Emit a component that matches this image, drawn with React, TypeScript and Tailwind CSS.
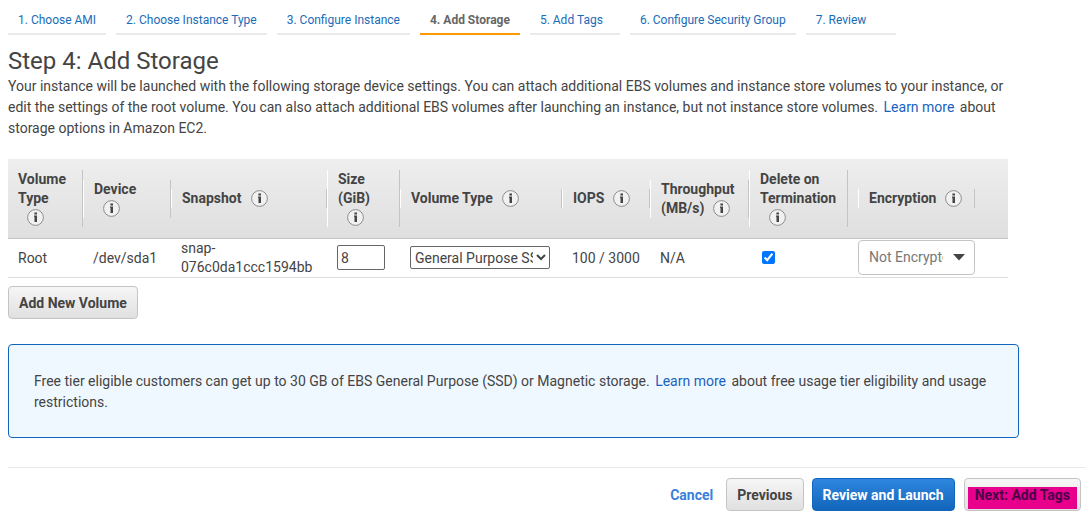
import React from "react";

type Step = { label: string; current?: boolean };

const steps: Step[] = [
  { label: "1. Choose AMI" },
  { label: "2. Choose Instance Type" },
  { label: "3. Configure Instance" },
  { label: "4. Add Storage", current: true },
  { label: "5. Add Tags" },
  { label: "6. Configure Security Group" },
  { label: "7. Review" },
];

function InfoButton({ topic }: { topic: string }) {
  return (
    <button type="button" aria-label={`About ${topic}`} className="mx-[9px] inline-block size-[17px] align-[-4px]">
      <svg viewBox="0 0 17 17" className="block size-full" aria-hidden="true">
        <circle cx="8.5" cy="8.5" r="7.9" fill="#f1f1f1" stroke="#8c8c8c" strokeWidth="1" />
        <path d="M7.4 3.4H10v2H7.4zM7 6.6h3V13H7.5V7.8H7z" fill="#444" />
      </svg>
    </button>
  );
}

type HeaderProps = { label: string; first?: boolean; inset?: boolean };

function HeaderCell({ label, first, inset }: HeaderProps) {
  return (
    <th scope="col" className={inset ? "py-[11px] pl-[10px] pr-[33px]" : "py-[11px]"}>
      <div
        className={
          first
            ? "border-r border-[#c4c4c4] pl-[10px]"
            : "border-l border-r border-l-white border-r-[#c4c4c4] pl-[10px]"
        }
      >
        {label}
        <InfoButton topic={label} />
      </div>
    </th>
  );
}

const button =
  "relative h-[33px] rounded-[4px] border border-[#c4c4c4] bg-linear-to-b from-[#f6f6f6] to-[#e0e0e0] px-[10px] pt-[2px] font-bold whitespace-nowrap";

export default function App() {
  return (
    <main className="flex min-h-screen flex-col bg-white pl-2 pr-[6px] font-[Roboto,sans-serif] text-[14px] leading-[21px] text-[#444]">
      <nav aria-label="Launch steps" className="flex flex-wrap gap-x-[10px] pt-[10px] text-[12px]">
        {steps.map((step) => (
          <a
            key={step.label}
            href="#"
            aria-current={step.current ? "step" : undefined}
            className={
              step.current
                ? "h-[25px] min-w-[90px] border-b-2 border-[#ff9900] px-[10px] font-bold leading-[20px] text-[#666]"
                : "h-[25px] min-w-[90px] border-b-2 border-[#eaeaea] px-[10px] leading-[20px] text-[#1a6cb8]"
            }
          >
            {step.label}
          </a>
        ))}
      </nav>

      <h1 className="mt-[12px] text-[24px] leading-[29px]">Step 4: Add Storage</h1>
      <p className="max-w-[1000px]">
        Your instance will be launched with the following storage device settings. You can attach additional EBS volumes
        and instance store volumes to your instance, or edit the settings of the root volume. You can also attach
        additional EBS volumes after launching an instance, but not instance store volumes.{" "}
        <a href="#" className="mx-[2px] text-[#1a62c0]">
          Learn more
        </a>{" "}
        about storage options in Amazon EC2.
      </p>

      <table className="mt-[20px] w-full max-w-[1000px] table-fixed border-collapse text-left leading-[19px]">
        <colgroup>
          <col className="w-[75px]" />
          <col className="w-[88px]" />
          <col className="w-[156px]" />
          <col className="w-[73px]" />
          <col className="w-[162px]" />
          <col className="w-[88px]" />
          <col className="w-[99px]" />
          <col className="w-[99px]" />
          <col />
        </colgroup>
        <thead>
          <tr className="border-b border-[#c4c4c4] bg-linear-to-b from-[#eeeeee] to-[#dfdfdf]">
            <HeaderCell label="Volume Type" first />
            <HeaderCell label="Device" />
            <HeaderCell label="Snapshot" />
            <HeaderCell label="Size (GiB)" />
            <HeaderCell label="Volume Type" />
            <HeaderCell label="IOPS" />
            <HeaderCell label="Throughput (MB/s)" />
            <HeaderCell label="Delete on Termination" />
            <HeaderCell label="Encryption" inset />
          </tr>
        </thead>
        <tbody>
          <tr className="border-b border-[#dddddd]">
            <td className="pl-[10px]">Root</td>
            <td className="pl-[10px]">/dev/sda1</td>
            <td className="pl-[10px]">snap-076c0da1ccc1594bb</td>
            <td className="pb-[2px] pl-[10px]">
              <input
                aria-label="Size (GiB)"
                defaultValue="8"
                className="block h-[25px] w-[48px] rounded-[2px] border border-[#666] px-[3px] pt-[2px]"
              />
            </td>
            <td className="pb-[2px] pl-[10px]">
              <select
                aria-label="Volume type"
                className="block h-[23px] w-[140px] rounded-[2px] border border-[#666] bg-white pt-px"
              >
                <option>General Purpose SSD (gp2)</option>
              </select>
            </td>
            <td className="pl-[10px]">100 / 3000</td>
            <td className="pl-[10px]">N/A</td>
            <td className="pb-[2px] pl-[13px]">
              <input type="checkbox" aria-label="Delete on termination" defaultChecked className="block size-[13px]" />
            </td>
            <td className="pb-[2px] pl-[10px]">
              <div className="relative w-[117px]">
                <select
                  aria-label="Encryption"
                  className="block h-[35px] w-full appearance-none rounded-[4px] border border-[#c4c4c4] bg-white pl-[10px] pr-[31px] pt-px text-[#777]"
                >
                  <option>Not Encrypted</option>
                </select>
                <svg
                  viewBox="0 0 12 7"
                  className="pointer-events-none absolute right-[10px] top-[14px] h-[7px] w-[12px]"
                  aria-hidden="true"
                >
                  <path d="M0 0h12L6 6.5z" fill="#444" />
                </svg>
              </div>
            </td>
          </tr>
        </tbody>
      </table>

      <div className="mt-2">
        <button type="button" className={button}>
          Add New Volume
        </button>
      </div>

      <aside className="mt-[25px] max-w-[1011px] rounded-[4px] border border-[#1166bb] bg-[#f0f8ff] px-[25px] pb-[24px] pt-[26px]">
        Free tier eligible customers can get up to 30 GB of EBS General Purpose (SSD) or Magnetic storage.{" "}
        <a href="#" className="mx-[2px] text-[#1a62c0]">
          Learn more
        </a>{" "}
        about free usage tier eligibility and usage restrictions.
      </aside>

      <footer className="mt-[29px] flex items-center justify-end border-t border-[#eaeaea] pr-[5px] pt-[10px]">
        <a href="#" className="mr-[13px] pt-[2px] font-bold text-[#3a80dd]">
          Cancel
        </a>
        <button type="button" className={button}>
          Previous
        </button>
        <button
          type="button"
          className="ml-2 h-[33px] rounded-[4px] border border-[#1166bb] bg-linear-to-b from-[#2e86de] to-[#1166bb] px-[10px] pt-[2px] font-bold whitespace-nowrap text-white"
        >
          Review and Launch
        </button>
        <div className="ml-[9px] flex">
          <button type="button" className={button}>
            <span className="absolute inset-x-[3px] bottom-px top-2 bg-[#e8008c]" aria-hidden="true" />
            <span className="relative text-[#4a0048]">Next: Add Tags</span>
          </button>
        </div>
      </footer>
    </main>
  );
}
